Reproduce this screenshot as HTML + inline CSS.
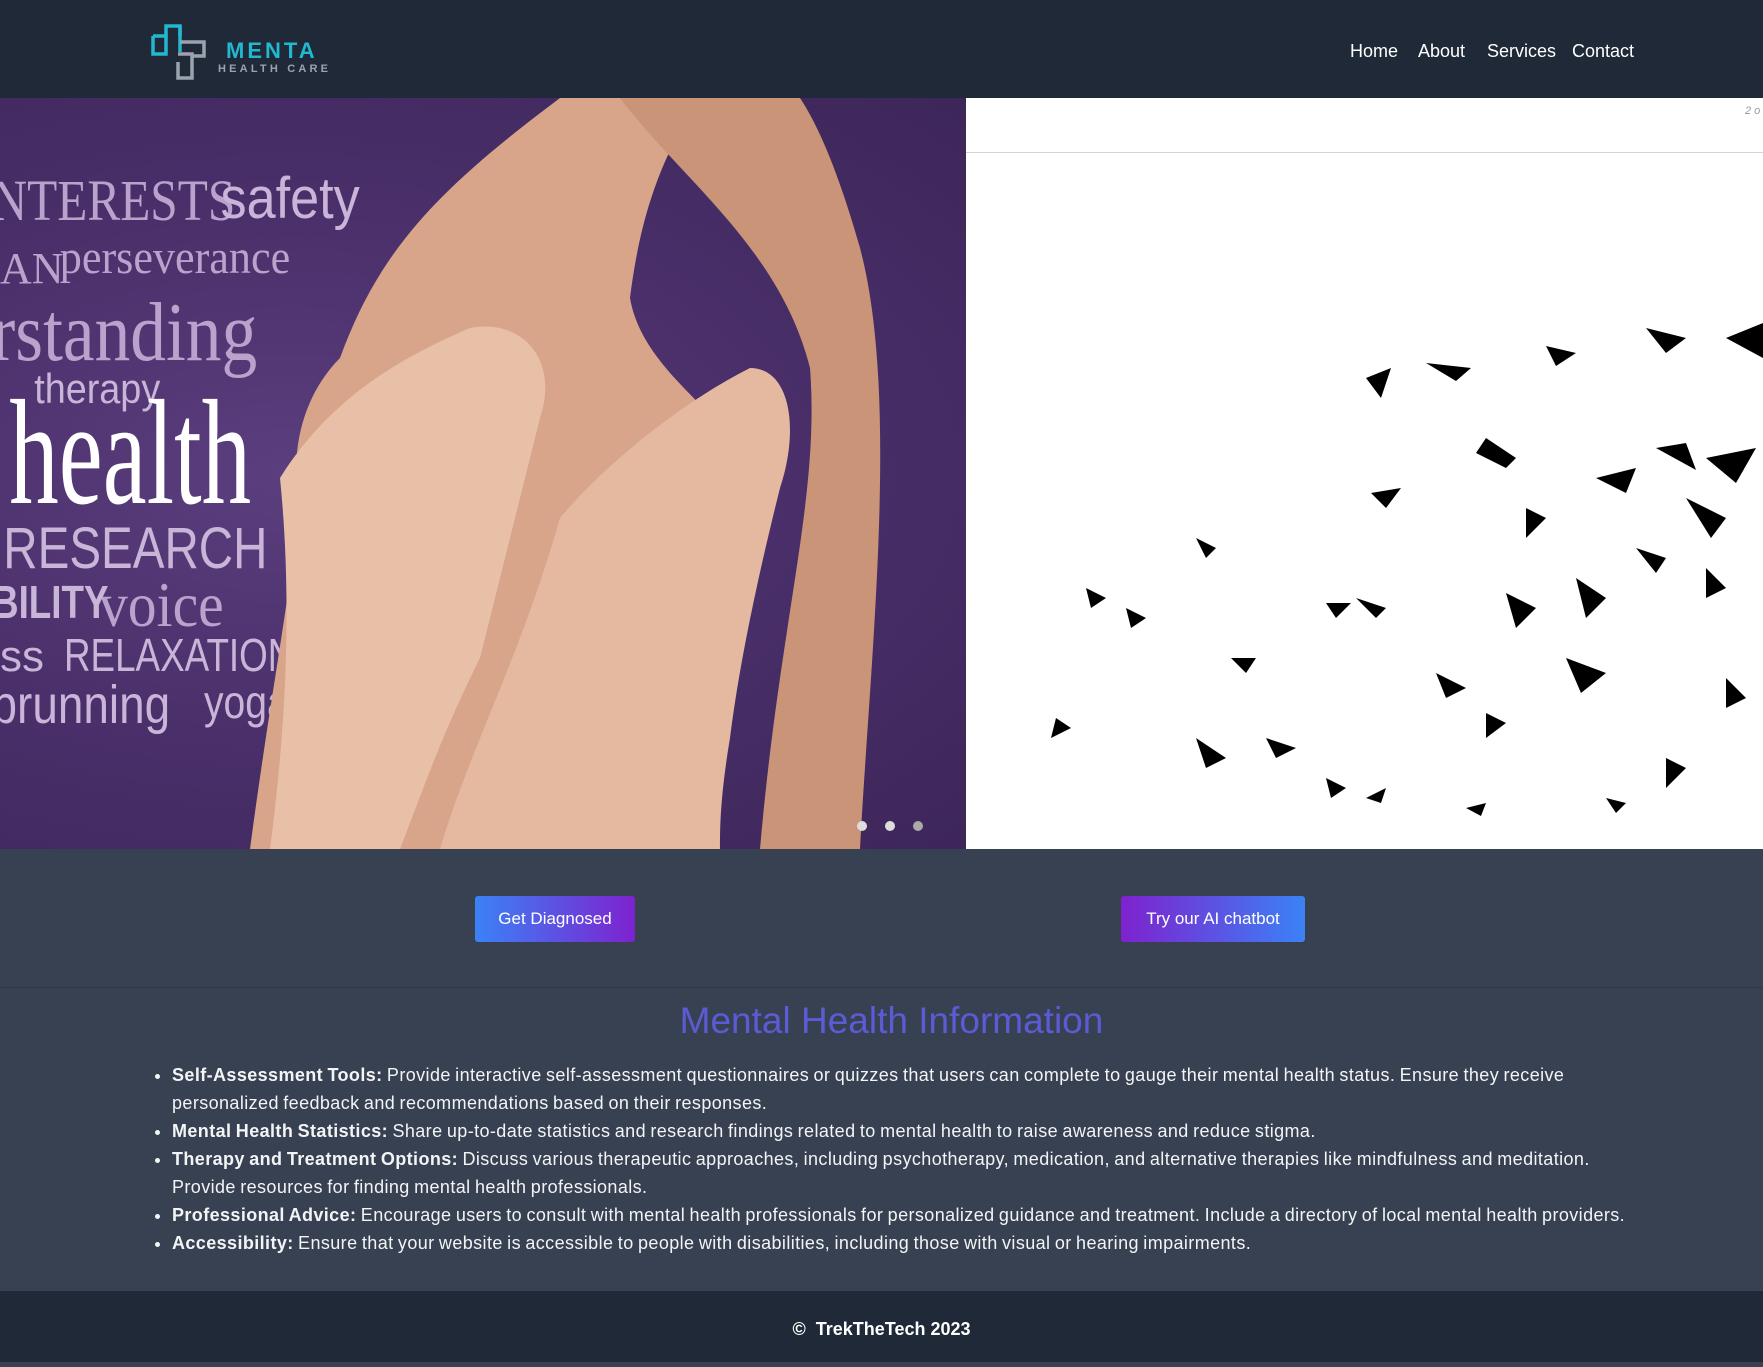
<!DOCTYPE html>
<html><head><meta charset="utf-8">
<style>
*{margin:0;padding:0;box-sizing:border-box}
body{width:1763px;height:1362px;overflow:hidden;background:#374151;font-family:"Liberation Sans",sans-serif;color:#fff}
header{position:absolute;left:0;top:0;width:1763px;height:98px;background:#1f2937}
.nav{position:absolute;top:41px;font-size:18px;color:#fff}
.car{position:absolute;top:98px;left:0;width:1763px;height:751px;background:#fff;overflow:hidden}
.btn{position:absolute;top:896px;height:46px;border-radius:3px;font-size:17px;line-height:46px;text-align:center;color:#fff}
h2{position:absolute;top:1000px;left:0;width:1783px;text-align:center;font-weight:normal;font-size:37px;color:#5b5bd6}
ul{position:absolute;left:172px;top:1061px;width:1470px;font-size:18px;letter-spacing:0.4px;word-spacing:-1px;line-height:28px;color:#f3f4f6}
li{margin:0}
footer{position:absolute;top:1291px;left:0;width:1763px;height:71px;background:#1f2937;text-align:center;line-height:76px;font-size:18px;font-weight:bold}
</style></head><body>
<header>
<svg style="position:absolute;left:148px;top:22px" width="62" height="60" viewBox="0 0 62 60">
<path d="M5 14 H18 V4 H32 V14" fill="none" stroke="#22b8cf" stroke-width="3.5"/>
<path d="M18 14 V32 H5 V14" fill="none" stroke="#22b8cf" stroke-width="3.5"/>
<path d="M32 4 V30" fill="none" stroke="#22b8cf" stroke-width="3.5"/>
<path d="M32 20 H56 V34 H44" fill="none" stroke="#9ca3af" stroke-width="3.5"/>
<path d="M30 32 H44 V56 H30 V40" fill="none" stroke="#9ca3af" stroke-width="3.5"/>
</svg>
<div style="position:absolute;left:226px;top:38px;font-size:22px;letter-spacing:3px;color:#22b8cf;font-weight:bold">MENTA</div>
<div style="position:absolute;left:218px;top:63px;font-size:11px;letter-spacing:3.2px;color:#9ca3af;font-weight:bold">HEALTH CARE</div>
<div class="nav" style="left:1350px">Home</div>
<div class="nav" style="left:1418px">About</div>
<div class="nav" style="left:1487px">Services</div>
<div class="nav" style="left:1572px">Contact</div>
</header>
<div class="car">
<div style="position:absolute;left:0;top:0;width:966px;height:751px;background:radial-gradient(ellipse at 30% 50%,#5b3e7e,#4a2f6a 50%,#3d2659);overflow:hidden">
<svg width="966" height="751" style="position:absolute;left:0;top:0">
<g font-family="Liberation Serif" fill="#b9a3cc">
<text x="-10" y="122" font-size="58" transform="scale(0.85,1)">NTERESTS</text>
<text x="0" y="185" font-size="44">AN</text>
<text x="65" y="175" font-size="48" transform="scale(0.92,1)">perseverance</text>
<text x="-10" y="262" font-size="84" transform="scale(0.85,1)">rstanding</text>
<text x="110" y="528" font-size="64" transform="scale(0.9,1)">voice</text>
</g>
<g font-family="Liberation Sans" fill="#c8b5d8">
<text x="245" y="120" font-size="58" transform="scale(0.9,1)">safety</text>
<text x="38" y="305" font-size="42" transform="scale(0.9,1)">therapy</text>
<text x="4" y="470" font-size="58" transform="scale(0.82,1)">RESEARCH</text>
<text x="-10" y="520" font-size="46" font-weight="bold" transform="scale(0.8,1)">BILITY</text>
<text x="0" y="573" font-size="44">ss</text>
<text x="80" y="573" font-size="46" transform="scale(0.8,1)">RELAXATION</text>
<text x="-10" y="625" font-size="54" transform="scale(0.85,1)">prunning</text>
<text x="240" y="620" font-size="46" transform="scale(0.85,1)">yoga</text>
</g>
<text x="14" y="405" font-family="Liberation Serif" font-size="150" fill="#fff" transform="scale(0.66,1)">health</text>
<path d="M250 751 C270 600 290 500 300 400 C290 360 300 300 340 260 C380 150 440 90 560 0 L700 0 C660 60 640 120 630 200 C640 260 700 300 720 330 C720 450 680 520 690 751 Z" fill="#d8a58a"/>
<path d="M440 751 C470 650 520 560 560 420 C610 360 690 300 750 270 C790 270 800 330 780 390 C760 470 740 560 730 640 C720 700 720 730 720 751 Z" fill="#e4b9a0"/>
<path d="M280 380 C330 300 400 260 470 230 C520 220 560 260 540 320 C520 400 500 480 480 560 C440 640 420 700 400 751 L270 751 C290 600 290 480 280 380 Z" fill="#e8c0a8"/>
<path d="M620 0 C680 80 780 150 810 270 C820 400 780 520 760 751 L860 751 C870 560 900 300 860 150 C840 80 820 30 800 0 Z" fill="#c99477"/>
<circle cx="862" cy="728" r="5" fill="#ddd"/><circle cx="890" cy="728" r="5" fill="#ddd"/><circle cx="918" cy="728" r="5" fill="#aaa"/>
</svg>
</div>
<div style="position:absolute;left:966px;top:54px;width:797px;height:1px;background:#d1d5db"></div>
<div style="position:absolute;left:1745px;top:7px;font-size:11px;color:#999;font-style:italic;letter-spacing:3px">2o</div>
<svg style="position:absolute;left:966px;top:0" width="797" height="751" fill="#000">
<polygon points="400,280 425,270 415,300"/><polygon points="405,395 435,390 420,410"/>
<polygon points="460,265 505,270 490,283"/><polygon points="580,248 610,255 590,268"/>
<polygon points="680,230 720,240 700,255"/><polygon points="760,240 797,225 797,260"/>
<polygon points="520,340 550,360 540,370 510,355"/><polygon points="560,410 580,420 560,440"/>
<polygon points="630,380 670,370 660,395"/><polygon points="690,350 720,345 730,372"/>
<polygon points="720,400 760,420 745,440"/><polygon points="740,360 790,350 770,385"/>
<polygon points="360,505 385,505 370,520"/><polygon points="160,510 180,520 165,530"/>
<polygon points="540,495 570,510 550,530"/><polygon points="610,480 640,500 620,520"/>
<polygon points="670,450 700,460 690,475"/><polygon points="740,470 760,490 740,500"/>
<polygon points="265,560 290,560 280,575"/><polygon points="90,620 105,630 85,640"/>
<polygon points="230,640 260,660 240,670"/><polygon points="470,575 500,590 480,600"/>
<polygon points="520,615 540,625 520,640"/><polygon points="600,560 640,575 615,595"/>
<polygon points="400,700 420,690 415,705"/><polygon points="500,710 520,705 515,718"/>
<polygon points="360,680 380,690 365,700"/><polygon points="700,660 720,670 700,690"/>
<polygon points="120,490 140,500 125,510"/><polygon points="230,440 250,450 240,460"/>
<polygon points="390,500 420,510 410,520"/><polygon points="300,640 330,650 310,660"/>
<polygon points="640,700 660,705 650,715"/><polygon points="760,580 780,600 760,610"/>
</svg>
</div>
<div class="btn" style="left:475px;width:160px;background:linear-gradient(90deg,#3b82f6,#7e22ce)">Get Diagnosed</div>
<div class="btn" style="left:1121px;width:184px;background:linear-gradient(90deg,#7e22ce,#3b82f6)">Try our AI chatbot</div>
<div style="position:absolute;left:0;top:987px;width:1763px;height:1px;background:#2d3644"></div>
<h2>Mental Health Information</h2>
<ul>
<li><b>Self-Assessment Tools:</b> Provide interactive self-assessment questionnaires or quizzes that users can complete to gauge their mental health status. Ensure they receive personalized feedback and recommendations based on their responses.</li>
<li><b>Mental Health Statistics:</b> Share up-to-date statistics and research findings related to mental health to raise awareness and reduce stigma.</li>
<li><b>Therapy and Treatment Options:</b> Discuss various therapeutic approaches, including psychotherapy, medication, and alternative therapies like mindfulness and meditation. Provide resources for finding mental health professionals.</li>
<li><b>Professional Advice:</b> Encourage users to consult with mental health professionals for personalized guidance and treatment. Include a directory of local mental health providers.</li>
<li><b>Accessibility:</b> Ensure that your website is accessible to people with disabilities, including those with visual or hearing impairments.</li>
</ul>
<footer>©&nbsp; TrekTheTech 2023</footer>
</body></html>
